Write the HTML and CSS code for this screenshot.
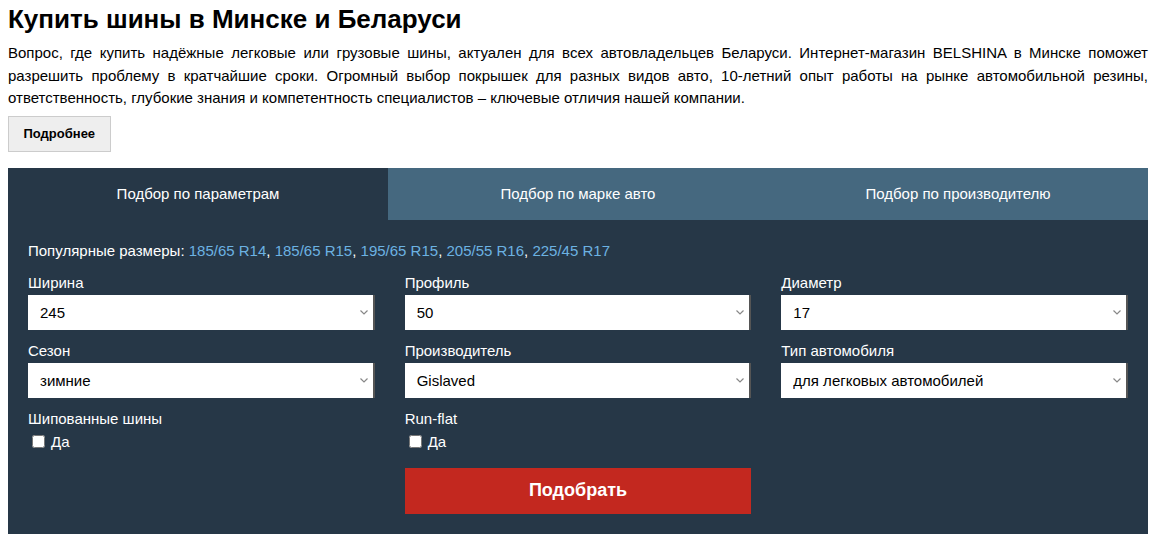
FILE: index.html
```html
<!DOCTYPE html>
<html lang="ru">
<head>
<meta charset="utf-8">
<title>Купить шины в Минске и Беларуси</title>
<link rel="stylesheet" href="styles.css">
</head>
<body>
<div class="page">
  <h1 class="title">Купить шины в Минске и Беларуси</h1>
  <p class="intro">Вопрос, где купить надёжные легковые или грузовые шины, актуален для всех автовладельцев Беларуси. Интернет-магазин BELSHINA в Минске поможет разрешить проблему в кратчайшие сроки. Огромный выбор покрышек для разных видов авто, 10-летний опыт работы на рынке автомобильной резины, ответственность, глубокие знания и компетентность специалистов – ключевые отличия нашей компании.</p>
  <button class="more-btn" type="button">Подробнее</button>

  <div class="finder">
    <div class="tabs">
      <div class="tab tab-active">Подбор по параметрам</div>
      <div class="tab">Подбор по марке авто</div>
      <div class="tab">Подбор по производителю</div>
    </div>
    <div class="finder-body">
      <div class="popular">Популярные размеры: <a href="#">185/65 R14</a>, <a href="#">185/65 R15</a>, <a href="#">195/65 R15</a>, <a href="#">205/55 R16</a>, <a href="#">225/45 R17</a></div>
      <div class="grid">
        <div class="field">
          <div class="label">Ширина</div>
          <div class="select-wrap">
            <select class="select"><option>245</option></select>
            <svg class="chev" width="8" height="5" viewBox="0 0 8 5"><path d="M0.5 0.5 L4 4 L7.5 0.5" fill="none" stroke="#888" stroke-width="1.2"/></svg>
          </div>
        </div>
        <div class="field">
          <div class="label">Профиль</div>
          <div class="select-wrap">
            <select class="select"><option>50</option></select>
            <svg class="chev" width="8" height="5" viewBox="0 0 8 5"><path d="M0.5 0.5 L4 4 L7.5 0.5" fill="none" stroke="#888" stroke-width="1.2"/></svg>
          </div>
        </div>
        <div class="field">
          <div class="label">Диаметр</div>
          <div class="select-wrap">
            <select class="select"><option>17</option></select>
            <svg class="chev" width="8" height="5" viewBox="0 0 8 5"><path d="M0.5 0.5 L4 4 L7.5 0.5" fill="none" stroke="#888" stroke-width="1.2"/></svg>
          </div>
        </div>

        <div class="field">
          <div class="label">Сезон</div>
          <div class="select-wrap">
            <select class="select"><option>зимние</option></select>
            <svg class="chev" width="8" height="5" viewBox="0 0 8 5"><path d="M0.5 0.5 L4 4 L7.5 0.5" fill="none" stroke="#888" stroke-width="1.2"/></svg>
          </div>
        </div>
        <div class="field">
          <div class="label">Производитель</div>
          <div class="select-wrap">
            <select class="select"><option>Gislaved</option></select>
            <svg class="chev" width="8" height="5" viewBox="0 0 8 5"><path d="M0.5 0.5 L4 4 L7.5 0.5" fill="none" stroke="#888" stroke-width="1.2"/></svg>
          </div>
        </div>
        <div class="field">
          <div class="label">Тип автомобиля</div>
          <div class="select-wrap">
            <select class="select"><option>для легковых автомобилей</option></select>
            <svg class="chev" width="8" height="5" viewBox="0 0 8 5"><path d="M0.5 0.5 L4 4 L7.5 0.5" fill="none" stroke="#888" stroke-width="1.2"/></svg>
          </div>
        </div>

        <div class="field">
          <div class="label">Шипованные шины</div>
          <label class="check"><input type="checkbox"> Да</label>
        </div>
        <div class="field">
          <div class="label">Run-flat</div>
          <label class="check"><input type="checkbox"> Да</label>
        </div>
        <div class="field"></div>

        <div class="field"></div>
        <div class="field">
          <button class="submit" type="button">Подобрать</button>
        </div>
      </div>
    </div>
  </div>
</div>
</body>
</html>
```
FILE: styles.css
```css
html, body {
  margin: 0;
  padding: 0;
  background: #fff;
}
body {
  font-family: "Liberation Sans", Arial, sans-serif;
  color: #000;
}
.page {
  width: 1140px;
  padding: 0 8px;
}
.title {
  margin: 0;
  padding-top: 4px;
  font-size: 26px;
  line-height: 30px;
  font-weight: bold;
}
.intro {
  margin: 8px 0 0;
  font-size: 15px;
  line-height: 22.5px;
  text-align: justify;
}
.more-btn {
  display: block;
  margin-top: 6px;
  height: 36px;
  padding: 0 14.5px;
  background: #eeeeee;
  border: 1px solid #cccccc;
  font-family: "Liberation Sans", Arial, sans-serif;
  font-size: 13px;
  font-weight: bold;
  color: #000;
}
.finder {
  margin-top: 16px;
  background: #263747;
}
.tabs {
  display: flex;
  height: 52px;
}
.tab {
  flex: 1;
  display: flex;
  align-items: center;
  justify-content: center;
  background: #45687f;
  color: #fff;
  font-size: 15px;
}
.tab-active {
  background: #263747;
}
.finder-body {
  padding: 20px 20px 20px;
  color: #fff;
  font-size: 15px;
}
.popular {
  line-height: 22px;
}
.popular a {
  color: #6cb2e2;
  text-decoration: none;
}
.grid {
  margin-top: 10px;
  display: grid;
  grid-template-columns: repeat(3, 1fr);
  column-gap: 30px;
  row-gap: 10px;
}
.label {
  line-height: 22px;
  margin-bottom: 1px;
}
.select-wrap {
  position: relative;
}
.select {
  display: block;
  width: 100%;
  height: 35px;
  appearance: none;
  -webkit-appearance: none;
  background: #fff;
  border: 0;
  border-right: 2px solid #555;
  border-radius: 0;
  padding: 0 0 0 12px;
  font-family: "Liberation Sans", Arial, sans-serif;
  font-size: 15px;
  color: #000;
}
.chev {
  position: absolute;
  right: 7px;
  top: 15px;
}
.check {
  display: flex;
  align-items: center;
  line-height: 21px;
}
.check input {
  width: 13px;
  height: 13px;
  margin: 3px 6px 3px 4px;
}
.submit {
  display: block;
  width: 100%;
  height: 46px;
  margin-top: 6px;
  background: #c3281f;
  border: 0;
  color: #fff;
  font-family: "Liberation Sans", Arial, sans-serif;
  font-size: 18px;
  font-weight: bold;
}
```
